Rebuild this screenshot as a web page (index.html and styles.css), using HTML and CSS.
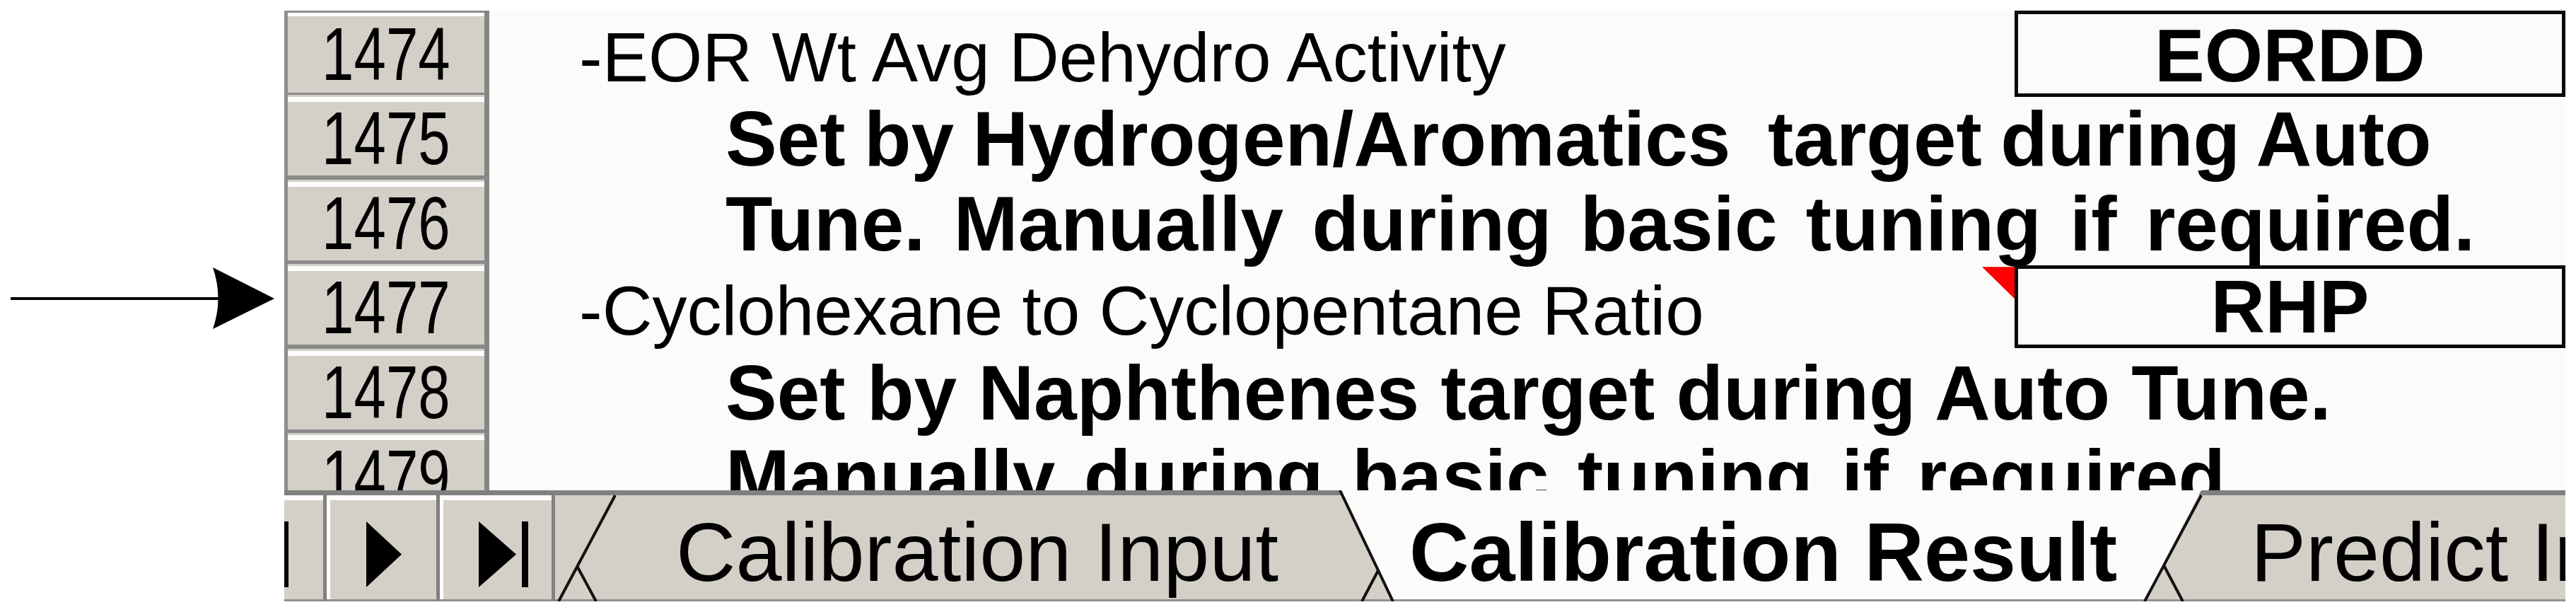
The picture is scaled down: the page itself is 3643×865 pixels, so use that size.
FILE: index.html
```html
<!DOCTYPE html>
<html lang="en">
<head>
  <meta charset="UTF-8">
  <title>Calibration Result</title>
  <link rel="stylesheet" href="styles.css">
</head>
<body>

  <div class="page">

    <!-- Pfeil auf Zeile 1477 -->
    <div class="gutter">
      <svg class="pointer" width="402" height="865" viewBox="0 0 402 865">
        <line x1="15" y1="422" x2="312" y2="422" stroke="#000" stroke-width="4"/>
        <path d="M301 378 L388 422 L301 465 Q316 422 301 378 Z" fill="#000"/>
      </svg>
    </div>

    <div class="window">

      <!-- Tabellenbereich -->
      <div class="sheet">
        <div class="row">
          <div class="hdr"><span>1474</span></div>
          <div class="cell"><span class="lbl">-EOR Wt Avg Dehydro Activity</span></div>
          <div class="cell"><div class="box">EORDD</div></div>
        </div>
        <div class="row">
          <div class="hdr"><span>1475</span></div>
          <div class="cell"><span class="note tight">Set by Hydrogen/Aromatics  target during Auto</span></div>
          <div class="cell"></div>
        </div>
        <div class="row">
          <div class="hdr"><span>1476</span></div>
          <div class="cell"><span class="note wide">Tune. Manually during basic tuning if required.</span></div>
          <div class="cell"></div>
        </div>
        <div class="row">
          <div class="hdr"><span>1477</span></div>
          <div class="cell">
            <span class="lbl">-Cyclohexane to Cyclopentane Ratio</span>
            <i class="comment"></i>
          </div>
          <div class="cell"><div class="box rhp">RHP</div></div>
        </div>
        <div class="row">
          <div class="hdr"><span>1478</span></div>
          <div class="cell"><span class="note">Set by Naphthenes target during Auto Tune.</span></div>
          <div class="cell"></div>
        </div>
        <div class="row">
          <div class="hdr"><span>1479</span></div>
          <div class="cell"><span class="note wide">Manually during basic tuning if required.</span></div>
          <div class="cell"></div>
        </div>
      </div>

      <!-- Blattregister -->
      <div class="tabbar">
        <div class="nav cut">
          <svg width="6" height="93"><rect x="0" y="0" width="6" height="93" fill="#000"/></svg>
        </div>
        <div class="nav next">
          <svg width="50" height="93"><polygon points="0,0 50,46.5 0,93" fill="#000"/></svg>
        </div>
        <div class="nav last">
          <svg width="70" height="93">
            <polygon points="0,0 53,46.5 0,93" fill="#000"/>
            <rect x="61" y="0" width="9" height="93" fill="#000"/>
          </svg>
        </div>

        <div class="tabs">
          <svg class="tabshape" width="2843" height="157" viewBox="0 0 2843 157">
            <rect x="0" y="0" width="2843" height="7" fill="#808080"/>
            <rect x="0" y="154" width="2843" height="3" fill="#909090"/>
            <g stroke="#111" stroke-width="4">
              <line x1="85" y1="7" x2="5" y2="157"/>
              <line x1="31" y1="107" x2="58" y2="157"/>
              <line x1="1170" y1="102" x2="1141" y2="157"/>
              <line x1="2275" y1="106" x2="2302" y2="157"/>
            </g>
            <polygon points="1110,0 2328,0 2248,154 1183,154" fill="#fbfcfa"/>
            <g stroke="#111" stroke-width="4">
              <line x1="1110" y1="0" x2="1185" y2="157"/>
              <line x1="2328" y1="7" x2="2248" y2="157"/>
            </g>
          </svg>
          <div class="tab input">Calibration Input</div>
          <div class="tab result">Calibration Result</div>
          <div class="tab predict">Predict Input</div>
        </div>
      </div>

    </div>
  </div>

</body>
</html>
```

FILE: styles.css
```css
body {
  margin: 0;
  background-color: #fff;
  color: #000;
  font-family: "Liberation Sans", Arial, sans-serif;
}

.page {
  display: flex;
  width: 3643px;
  height: 865px;
  overflow: hidden;
}

.gutter {
  flex: none;
  width: 402px;
}

.pointer {
  display: block;
}

.window {
  display: flex;
  flex-direction: column;
  width: 3226px;
  margin-top: 15px;
}

/* Tabelle */

.sheet {
  height: 678px;
  overflow: hidden;
  background-color: #fbfcfa;
}

.row {
  display: grid;
  grid-template-columns: 290px 2157px 779px;
  height: 119.4px;
}

.hdr {
  box-sizing: border-box;
  height: 100%;
  padding-top: 8px;
  border-left: 5px solid #8e8e8e;
  border-right: 7px solid #858585;
  border-bottom: 6px solid #8a8a8a;
  background-color: #d4d0c8;
  box-shadow: inset 0 3px 0 #d4d0c8, inset 0 10px 0 #fdfdfb;
  text-align: center;
  font-size: 106px;
  line-height: 1;
}

.row:first-child .hdr {
  box-shadow: inset 0 3px 0 #8e8e8e, inset 0 8px 0 #fdfdfb;
}

.hdr span {
  display: inline-block;
  transform: scaleX(0.77);
}

.cell {
  position: relative;
}

.lbl {
  display: block;
  padding: 17px 0 0 127px;
  font-size: 98px;
  line-height: 1;
  white-space: pre;
}

.note {
  display: block;
  padding: 8px 0 0 334px;
  font-size: 109px;
  font-weight: bold;
  line-height: 1;
  white-space: pre;
}

.note.tight {
  word-spacing: -4px;
}

.note.wide {
  word-spacing: 10px;
}

.box {
  box-sizing: border-box;
  height: 122px;
  padding-top: 5px;
  border: 5px solid #0a0a0a;
  text-align: center;
  font-size: 106px;
  font-weight: bold;
  line-height: 1;
}

.box.rhp {
  height: 117px;
  margin-top: 2px;
  padding-top: 0;
}

.comment {
  position: absolute;
  top: 4px;
  right: 0;
  width: 46px;
  height: 45px;
  background-color: #f00;
  clip-path: polygon(0 0, 100% 0, 100% 100%);
}

/* Register unten */

.tabbar {
  display: flex;
  height: 157px;
  background-color: #d4d0c8;
}

.nav {
  box-sizing: border-box;
  flex: none;
  height: 100%;
  padding-top: 37px;
  border-top: 7px solid #808080;
  border-right: 5px solid #808080;
  border-bottom: 3px solid #909090;
  box-shadow: inset 5px 7px 0 #fdfdfb;
}

.nav svg {
  display: block;
}

.nav.cut {
  width: 60px;
  box-shadow: inset 0 7px 0 #fdfdfb;
}

.nav.next {
  width: 160px;
  padding-left: 56px;
}

.nav.last {
  width: 163px;
  padding-left: 55px;
}

.tabs {
  position: relative;
  display: flex;
  flex: 1;
  overflow: hidden;
}

.tabshape {
  position: absolute;
  top: 0;
  left: 0;
}

.tab {
  position: relative;
  flex: none;
  padding-top: 29px;
  font-size: 117px;
  line-height: 1;
  white-space: nowrap;
}

.tab.input {
  width: 1037px;
  margin-left: 171px;
}

.tab.result {
  width: 1190px;
  font-weight: bold;
}
```
